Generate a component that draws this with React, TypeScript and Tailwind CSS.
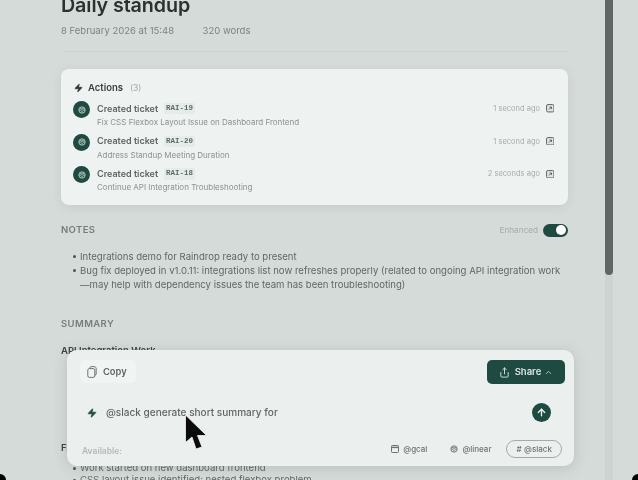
import { ChevronUp, ArrowUp, Share, Zap } from 'lucide-react';

const tickets = [
  { id: 'RAI-19', title: 'Fix CSS Flexbox Layout Issue on Dashboard Frontend', time: '1 second ago' },
  { id: 'RAI-20', title: 'Address Standup Meeting Duration', time: '1 second ago' },
  { id: 'RAI-18', title: 'Continue API Integration Troubleshooting', time: '2 seconds ago' },
];

// Round mark used for the linear integration
const LinearMark = ({ className }: { className: string }) => (
  <svg className={className} viewBox="0 0 10 10" fill="none" stroke="currentColor" strokeWidth="1.1">
    <circle cx="5" cy="5" r="4" />
    <path d="M1.5 4 L5 2.5 L8.5 4 M1.5 6 L5 4.5 L8.5 6 M3 8 L5 7 L7 8" />
  </svg>
);

const OpenBox = () => (
  <svg className="ml-[5.5px] h-[8.5px] w-[8.5px]" viewBox="0 0 9 9" fill="none">
    <rect x="0.6" y="0.6" width="7.8" height="7.8" rx="1.4" fill="#dfe5e3" stroke="#56605d" strokeWidth="1" />
    <path d="M3.2 5.8 L5.6 3.4 M3.8 3.2 H5.8 V5.2" stroke="#46504d" strokeWidth="0.9" />
  </svg>
);

const Bullet = ({ children }: { children: React.ReactNode }) => (
  <li className="flex">
    <span className="mt-[5px] h-[3px] w-[3px] shrink-0 rounded-full bg-[#4c5452]" />
    <span className="ml-[4.5px]">{children}</span>
  </li>
);

const App = () => {
  return (
    <div className="relative h-[480px] w-[638px] overflow-hidden bg-[#d5dbd9] font-['Inter',sans-serif] antialiased blur-[0.4px]">
      <div className="flex h-full">
        {/* Note column */}
        <main className="ml-[61px] w-[507px] shrink-0">
          <h1 className="-mt-[7px] text-[19.7px] leading-[24px] font-semibold tracking-[-0.1px] text-[#2a3230]">Daily standup</h1>
          <div className="mt-[7px] flex text-[9.5px] leading-[14px] text-[#7b8381]">
            <span>8 February 2026 at 15:48</span>
            <span className="ml-[28.5px]">320 words</span>
          </div>
          <div className="mt-[13px] ml-[3px] h-px w-[504px] bg-[#cdd3d1]" />

          {/* Actions card */}
          <section className="mt-[17px] h-[136px] rounded-[8px] bg-[#eef2f0] pt-[12px] pr-[14px] pl-[12px] shadow-[0_2px_10px_rgba(90,105,100,0.12)]">
            <div className="flex h-[14px] items-center">
              <Zap className="ml-[1px] h-[10px] w-[9px] fill-[#2d3533] text-[#2d3533]" />
              <span className="ml-[5px] text-[9.5px] font-semibold text-[#3a4240]">Actions</span>
              <span className="ml-[7px] text-[8.5px] text-[#a4aaa8]">(3)</span>
            </div>
            <div className="mt-[6.5px] flex flex-col gap-[4.7px]">
              {tickets.map((t) => (
                <div key={t.id} className="flex h-[28px] items-start">
                  <div className="-mt-[0.5px] flex h-[17px] w-[17px] shrink-0 items-center justify-center rounded-full bg-[#1f4a41]">
                    <LinearMark className="h-[8px] w-[8px] text-[#b9cbc5]" />
                  </div>
                  <div className="ml-[7px] min-w-0 flex-1">
                    <div className="flex h-[14px] items-center">
                      <span className="text-[9px] font-semibold text-[#5d6563]">Created ticket</span>
                      <span className="ml-[6px] rounded-[2px] bg-[#e4ebe8] px-[2px] font-['Liberation_Mono',monospace] text-[7.5px] font-bold text-[#5f6a67]">{t.id}</span>
                    </div>
                    <div className="mt-[1.5px] text-[8px] leading-[11px] text-[#8b9290]">{t.title}</div>
                  </div>
                  <div className="flex h-[14px] items-center">
                    <span className="text-[7.5px] text-[#a6acaa]">{t.time}</span>
                    <OpenBox />
                  </div>
                </div>
              ))}
            </div>
          </section>

          {/* Notes */}
          <div className="mt-[17px] flex h-[16px] items-center justify-between">
            <h2 className="text-[9.5px] font-semibold tracking-[0.4px] text-[#757d7b]">NOTES</h2>
            <div className="flex items-center">
              <span className="text-[8.2px] text-[#a5abaa]">Enhanced</span>
              <div className="ml-[5px] flex h-[13px] w-[25px] items-center justify-end rounded-full bg-[#1f4a41] pr-[2px]">
                <div className="h-[10px] w-[10px] rounded-full bg-white" />
              </div>
            </div>
          </div>
          <ul className="mt-[12px] ml-[11.5px] text-[9.55px] leading-[14px] text-[#5f6765]">
            <Bullet>Integrations demo for Raindrop ready to present</Bullet>
            <Bullet>
              Bug fix deployed in v1.0.11: integrations list now refreshes properly (related to ongoing API integration work
              <br />
              —may help with dependency issues the team has been troubleshooting)
            </Bullet>
          </ul>

          {/* Summary */}
          <h2 className="mt-[25px] text-[9.5px] leading-[14px] font-semibold tracking-[0.4px] text-[#757d7b]">SUMMARY</h2>
          <h3 className="mt-[13px] text-[9.5px] leading-[14px] font-semibold text-[#3a4240]">API Integration Work</h3>
          <h3 className="mt-[83px] text-[9.5px] leading-[14px] font-semibold text-[#3a4240]">Frontend</h3>
          <ul className="mt-[7px] ml-[11.5px] text-[9.55px] leading-[12px] text-[#5f6765]">
            <Bullet>Work started on new dashboard frontend</Bullet>
            <Bullet>CSS layout issue identified: nested flexbox problem</Bullet>
          </ul>
        </main>

        {/* Scrollbar */}
        <div className="ml-[37px] h-full w-[8px] shrink-0 bg-[#ccd3d1]">
          <div className="h-[275px] rounded-b-[4px] bg-[#5f6764]" />
        </div>
      </div>

      {/* Floating composer */}
      <div className="absolute top-[350px] left-[67px] h-[116px] w-[507px] rounded-[10px] bg-[#ebf0ee] px-[13px] pt-[10px] shadow-[0_2px_14px_rgba(80,95,90,0.22)]">
        <div className="flex items-start justify-between">
          <div className="flex h-[23px] w-[56px] items-center rounded-[5px] bg-[#f0f4f2] pl-[7px]">
            {/* Copy glyph: clipboard with a folded corner */}
            <svg className="h-[12px] w-[10px] text-[#6c7472]" viewBox="0 0 10 12" fill="none" stroke="currentColor" strokeWidth="1">
              <rect x="0.8" y="2.6" width="7" height="8.8" rx="1.6" />
              <path d="M3 2.6 V1.8 C3 1 3.6 0.6 4.3 0.6 H7 C8.3 0.6 9.2 1.5 9.2 2.8 V8 C9.2 8.8 8.6 9.2 7.8 9.2" />
            </svg>
            <span className="ml-[6px] pt-[1px] text-[9.3px] font-semibold text-[#5d6563]">Copy</span>
          </div>
          <div className="-mr-[4px] flex h-[24px] w-[78px] items-center justify-center rounded-[5px] bg-[#1f4a41] text-[#dbe5e2]">
            <Share className="h-[11px] w-[11px]" />
            <span className="ml-[5px] text-[9.5px] font-semibold">Share</span>
            <ChevronUp className="ml-[3px] h-[9px] w-[9px]" />
          </div>
        </div>
        <div className="mt-[19px] flex h-[19px] items-center justify-between">
          <div className="flex items-center">
            <Zap className="ml-[7px] h-[12px] w-[10px] fill-[#1f4a41] text-[#1f4a41]" />
            <span className="ml-[9px] pt-[1px] text-[10.05px] font-medium text-[#5f6765]">@slack generate short summary for</span>
          </div>
          <div className="mr-[10px] flex h-[19px] w-[19px] items-center justify-center rounded-full bg-[#1f4a41]">
            <ArrowUp className="h-[11px] w-[11px] text-[#e6eeeb]" strokeWidth={3} />
          </div>
        </div>
        <div className="mt-[17px] flex h-[20px] items-center justify-between">
          <span className="ml-[2px] pt-[4px] text-[8.5px] font-semibold text-[#b4bab8]">Available:</span>
          <div className="-mr-[0.5px] flex items-center text-[8px] font-medium text-[#6c7472]">
            <svg className="h-[8px] w-[8px]" viewBox="0 0 8 8" fill="none" stroke="currentColor">
              <rect x="0.5" y="0.5" width="7" height="7" rx="0.8" />
              <path d="M0.5 2.4 H7.5" strokeWidth="1.4" />
            </svg>
            <span className="ml-[4px]">@gcal</span>
            <LinearMark className="ml-[23px] h-[8px] w-[8px]" />
            <span className="ml-[4px]">@linear</span>
            <div className="ml-[14px] flex h-[18px] w-[56px] items-center rounded-full border border-[#a3aca9] pl-[10px]">
              <span>#</span>
              <span className="ml-[2.5px]">@slack</span>
            </div>
          </div>
        </div>
      </div>

      {/* Mouse cursor */}
      <svg className="absolute top-[414px] left-[184px]" width="24" height="38" viewBox="0 0 24 38">
        <path d="M1.5 1 L1.5 28.5 L8 23 L12 35 L18 33 L13.5 21.5 L22.5 21.5 Z" fill="#0b0b0b" stroke="#f4f6f5" strokeWidth="0.8" strokeLinejoin="round" />
      </svg>

      {/* Window corners */}
      <div className="absolute -bottom-[6px] -left-[6px] h-[12px] w-[12px] rounded-full bg-black" />
      <div className="absolute -right-[6px] -bottom-[6px] h-[12px] w-[12px] rounded-full bg-black" />
    </div>
  );
};

export default App;
